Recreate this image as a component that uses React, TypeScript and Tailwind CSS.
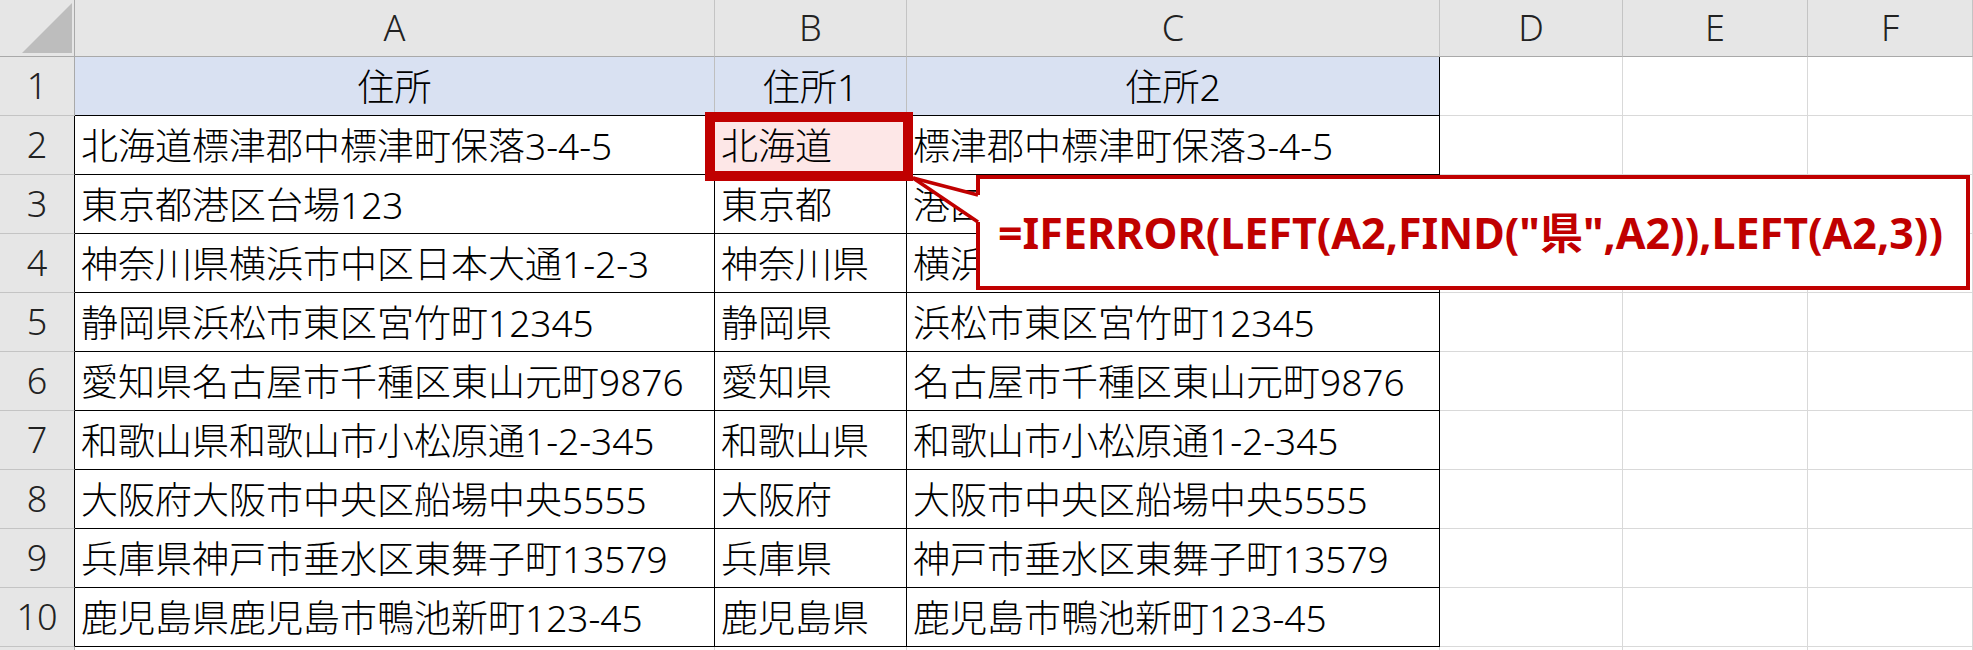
import React from 'react';

const cols = ['A', 'B', 'C', 'D', 'E', 'F'];

const rows: string[][] = [
  ['北海道標津郡中標津町保落3-4-5', '北海道', '標津郡中標津町保落3-4-5'],
  ['東京都港区台場123', '東京都', '港区台場123'],
  ['神奈川県横浜市中区日本大通1-2-3', '神奈川県', '横浜市中区日本大通1-2-3'],
  ['静岡県浜松市東区宮竹町12345', '静岡県', '浜松市東区宮竹町12345'],
  ['愛知県名古屋市千種区東山元町9876', '愛知県', '名古屋市千種区東山元町9876'],
  ['和歌山県和歌山市小松原通1-2-345', '和歌山県', '和歌山市小松原通1-2-345'],
  ['大阪府大阪市中央区船場中央5555', '大阪府', '大阪市中央区船場中央5555'],
  ['兵庫県神戸市垂水区東舞子町13579', '兵庫県', '神戸市垂水区東舞子町13579'],
  ['鹿児島県鹿児島市鴨池新町123-45', '鹿児島県', '鹿児島市鴨池新町123-45'],
];

const colHead =
  'flex items-center justify-center bg-[#e6e6e6] border-r border-b border-r-[#c4c4c4] border-b-[#a9a9a9] text-[#222]';
const rowHeadBase =
  'flex items-center justify-center bg-[#e6e6e6] border-r border-b border-b-[#c4c4c4] text-[#222]';
const emptyCell = 'border-r border-b border-[#d9d9d9]';
const dataCell = 'flex items-center pl-[6px] whitespace-nowrap text-[37px] border-r border-b border-black';
const titleCell = 'flex items-center justify-center text-[37px] bg-[#d9e1f2] border-r border-b';

const formula = '=IFERROR(LEFT(A2,FIND("県",A2)),LEFT(A2,3))';

export default function App() {
  return (
    <div
      className="relative w-[1973px] h-[650px] overflow-hidden bg-white text-[36px] font-light leading-none text-black"
      style={{ fontFamily: '"Noto Sans", "Noto Sans CJK JP", sans-serif' }}
    >
      <div className="grid grid-cols-[75px_640px_192px_533px_183px_185px_165px] grid-rows-[57px_repeat(11,59px)]">
        {/* corner */}
        <div className="flex items-end justify-end pr-[2px] pb-[3px] bg-[#e6e6e6] border-r border-b border-[#a9a9a9]">
          <svg width="50" height="50" viewBox="0 0 50 50">
            <polygon points="0,50 50,50 50,0" fill="#bdbdbd" />
          </svg>
        </div>
        {cols.map((c) => (
          <div key={c} className={colHead}>
            {c}
          </div>
        ))}

        {/* row 1 */}
        <div className={`${rowHeadBase} border-r-[#a9a9a9]`}>1</div>
        <div className={`${titleCell} border-r-[#bfbfbf] border-b-black`}>住所</div>
        <div className={`${titleCell} border-r-[#bfbfbf] border-b-black`}>住所1</div>
        <div className={`${titleCell} border-black`}>住所2</div>
        <div className={emptyCell} />
        <div className={emptyCell} />
        <div className={emptyCell} />

        {rows.map((r, i) => (
          <React.Fragment key={i}>
            <div className={`${rowHeadBase} border-r-black`}>{i + 2}</div>
            <div className={dataCell}>{r[0]}</div>
            <div className={i === 0 ? `${dataCell} bg-[#fde7e7]` : dataCell}>{r[1]}</div>
            <div className={dataCell}>{r[2]}</div>
            <div className={emptyCell} />
            <div className={emptyCell} />
            <div className={emptyCell} />
          </React.Fragment>
        ))}

        {/* row 11, only its top edge shows */}
        <div className={`${rowHeadBase} border-r-[#a9a9a9]`} />
        <div className={emptyCell} />
        <div className={emptyCell} />
        <div className={emptyCell} />
        <div className={emptyCell} />
        <div className={emptyCell} />
        <div className={emptyCell} />
      </div>

      {/* active cell frame */}
      <div className="absolute left-[705px] top-[112px] w-[208px] h-[69px] border-[10px] border-[#c00000]" />

      {/* callout */}
      <div className="absolute left-[976px] top-[175px] w-[994px] h-[115px] flex items-center pl-[18px] bg-white border-4 border-[#c00000]">
        <span className="text-[43px] font-bold text-[#c00000] whitespace-nowrap">{formula}</span>
      </div>
      <svg className="absolute left-[905px] top-[170px]" width="80" height="60" viewBox="0 0 80 60">
        <polygon points="8,8 73,25 76,25 76,52 73,52" fill="#ffffff" />
        <line x1="8" y1="8" x2="73" y2="25" stroke="#c00000" strokeWidth="3.5" />
        <line x1="8" y1="8" x2="73" y2="52" stroke="#c00000" strokeWidth="3.5" />
      </svg>
    </div>
  );
}
